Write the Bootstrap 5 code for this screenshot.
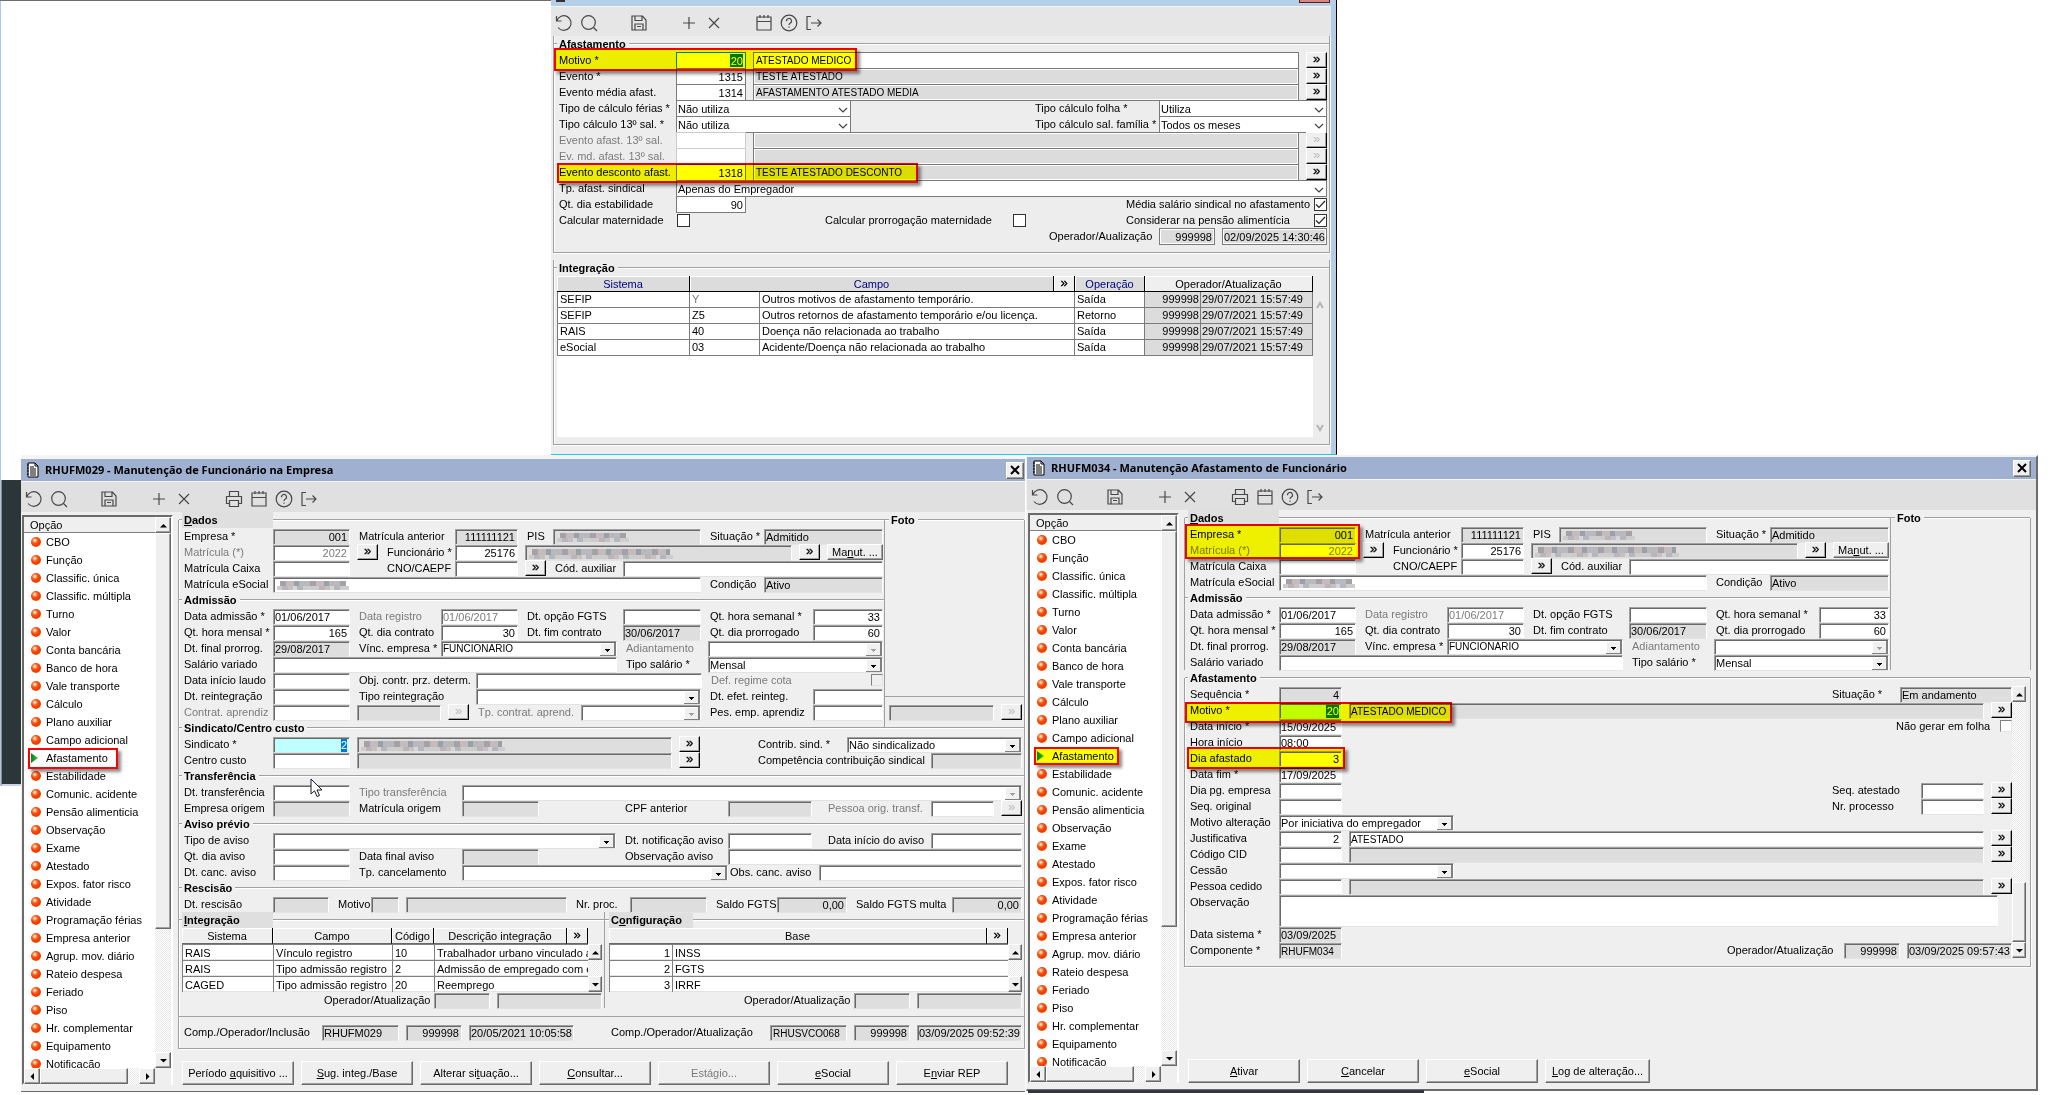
<!DOCTYPE html>
<html lang="pt-BR">
<head>
<meta charset="utf-8">
<meta name="viewport" content="width=device-width, initial-scale=1">
<title>Manutenção de Afastamento</title>
<link href="https://cdn.jsdelivr.net/npm/bootstrap@5.3.0/dist/css/bootstrap.min.css" rel="stylesheet">
<style>
:root{--u:7px;--face:#efefef;--bar:#e0e0e0;
--arr:url("data:image/svg+xml,%3Csvg xmlns='http://www.w3.org/2000/svg' width='16' height='14' shape-rendering='crispEdges'%3E%3Cpath fill='%23f0f0f0' d='M0 0h16v14H0z'/%3E%3Cpath stroke='%23fff' fill='none' d='M.5 13V.5H15'/%3E%3Cpath stroke='%23808080' stroke-width='2' fill='none' d='M0 13h15V0'/%3E%3Cpath d='M5 6h5v1H5zM6 7h3v1H6zM7 8h1v1H7z'/%3E%3C/svg%3E");
--arroff:url("data:image/svg+xml,%3Csvg xmlns='http://www.w3.org/2000/svg' width='16' height='14' shape-rendering='crispEdges'%3E%3Cpath fill='%23f0f0f0' d='M0 0h16v14H0z'/%3E%3Cpath stroke='%23fff' fill='none' d='M.5 13V.5H15'/%3E%3Cpath stroke='%23808080' stroke-width='2' fill='none' d='M0 13h15V0'/%3E%3Cpath fill='%23a0a0a0' d='M5 6h5v1H5zM6 7h3v1H6zM7 8h1v1H7z'/%3E%3C/svg%3E");
--chev:url("data:image/svg+xml,%3Csvg xmlns='http://www.w3.org/2000/svg' width='12' height='14'%3E%3Cpath stroke='%23444' stroke-width='1.2' fill='none' d='M1 6l4 4 4-4'/%3E%3C/svg%3E");
--tick:url("data:image/svg+xml,%3Csvg xmlns='http://www.w3.org/2000/svg' width='11' height='11'%3E%3Cpath stroke='%23222' stroke-width='1.2' fill='none' d='M1 5.5l3 3 6-6.500'/%3E%3C/svg%3E")}
body{font-family:"Liberation Sans",Arial,sans-serif;font-size:11px;line-height:16px;color:#000;background:#fff;overflow-x:hidden}
.strip{position:absolute;left:0;top:0;width:21px;height:786px;border-left:1px solid #a9c8ea;z-index:-1}
.strip::after{content:"";position:absolute;left:0;right:0;top:480px;bottom:0;background:#2b3639;border-left:1px solid #8a8a8a;border-bottom:2px solid #c9d3ea}
.gap-l{flex:551 1 0;border-top:1px solid #6d6d6d}
.gap-r{flex:721 1 0}
.win-top{flex:785 1 1px;min-width:0;background:#ededed;border-right:1px solid #000;border-bottom:1px solid #22c8e0;--bar:#e6e6e6;--face:#ededed}
.win-top .inner{border-right:5px solid #b4cde6;padding:0 1px 9px 2px}
.win-top .tools{height:30px;margin:0 -1px 0 -2px}
.win-top .frame+.frame{margin-top:15px;padding-bottom:7px}
.topcap{height:6px;background:#b5cfe9;padding:0 6px 0 5px}
.topcap i{width:9px;height:2px;background:#333}
.topcap b{width:31px;height:3px;background:#d98880;border:1px solid #5a1a1a;border-top:0}
.lower{padding:0 20px 0 21px;gap:1px}
.win{background:var(--face);min-width:0}
.win-a{flex:1004 1 0;border-top:4px solid #f4f4f4;box-shadow:inset 0 1px #dde3ec;border-bottom:1px solid #6b6b6b;margin-bottom:2px}
.win-b{flex:1009 1 3px;border:solid;border-width:2px 2px 2px 1px;border-color:#f2f2f2 #6b6b6b #6b6b6b #f2f2f2;margin-bottom:4px}
.cap{height:22px;background:#a0b0d0;padding:0 1px 0 6px;font:bold 11px/22px "Noto Sans","DejaVu Sans",sans-serif}
.cap svg{width:12px;height:16px}
.cap span{margin-left:6px}
.bevel{background:#efefef;border:1px solid;border-color:#fff #696969 #696969 #fff;box-shadow:inset -1px -1px #a0a0a0;padding:0;color:#000;font-size:11px;line-height:14px;border-radius:0;flex:none}
.xbtn{width:18px;height:17px}
.xbtn svg{width:10px;height:10px;display:block;margin:auto}
.tools{height:31px;background:var(--bar);border-top:1px solid #f4f4f4;padding-top:3px}
.tools button{width:25px;height:25px;border:0;background:none;padding:0;flex:none}
.tools svg{width:18px;height:18px;fill:none;stroke:#484848;stroke-width:1.2;display:block;margin:auto}
.skip{margin-left:25px}
.side{width:151px;height:570px;margin:3px 5px 6px 1px;border:2px solid;border-color:#6b6b6b #fff #fff #6b6b6b;flex:none;background:#fff}
.side-head{height:16px;background:#efefef;border-bottom:1px solid #808080;padding-left:6px}
.tree{height:535px;overflow:hidden;margin:0;padding:0;list-style:none;background:#fff}
.tree li{height:18px;position:relative}
.tree a{color:#000;text-decoration:none;line-height:18px;padding-left:7px}
.tree a::before{content:"";width:10px;height:10px;border-radius:50%;margin-right:5px;background:radial-gradient(circle at 38% 34%,#fff 0,#ffb27a 14%,#f85010 34%,#f03800 62%,#f8a800 100%)}
.tree a.cur::before{border-radius:0;width:7px;margin-right:8px;background:linear-gradient(90deg,#0a7a2a,#36c936);clip-path:polygon(0 0,100% 50%,0 100%)}
.sb{background:repeating-conic-gradient(#fff 0 25%,#e8e8e8 0 50%) 0 0/2px 2px;width:16px;flex:none}
.sb button,.hs button{display:block;width:100%;height:16px;position:relative}
.sb i{display:block;border:1px solid;border-color:#fff #696969 #696969 #fff;background:#efefef;box-shadow:inset -1px -1px #a0a0a0}
.sb svg,.hs svg{width:7px;height:7px;display:block;margin:auto}
.th-tree{height:396px}
.hs{height:17px;background:repeating-conic-gradient(#fff 0 25%,#e8e8e8 0 50%) 0 0/2px 2px}
.hs button{width:16px;height:16px}
.hs .bevel{height:16px}
.th-h{width:88px}
.hs .corner{width:16px;background:#efefef}
.main{flex:1 1 0;min-width:0}
.main-b{padding-right:5px}
.frame{border:1px solid #a0a0a0;border-top:0;margin-top:8px;box-shadow:1px 1px #fff,inset 1px 0 #fff;padding-bottom:8px}
.frame>.leg:first-child,.lift{margin-top:-8px}
.leg{height:16px;font-weight:bold;display:flex;align-items:center}
.leg::before,.leg::after{content:"";height:2px;border-top:1px solid #a0a0a0;background:#fff;width:3px;flex:none}
.leg::after{flex:1 1 0}
.leg span{padding:0 3px 0 2px}
.leg .hot{background:#dfdfdf;height:16px;width:91px}
.leg .hot2{background:#dfdfdf;width:84px}
.leg.wide::before{width:4px}
.frow{height:16px;padding:0 2px 0 3px;position:relative}
.frow>*{flex:none}
.frow>.grow{flex:1 1 0;min-width:0}
label{padding-left:2px;white-space:nowrap}
.dim{color:#7b7b7b}
.fld{height:16px;margin-top:1px;border:1px solid;border-color:#a0a0a0 #fff #e3e3e3 #a0a0a0;box-shadow:inset 1px 1px #696969;background:#fff;padding:0 0 0 1px;font-size:11px;line-height:14px;color:#000;border-radius:0;outline:0}
.fld.dim{color:#7b7b7b}
.fld.num{text-align:right;padding-right:2px}
.ro{background:#dedede}
.fld.caps{font-size:10px}
.fld.caps.desc{padding-left:2px}
select.fld{appearance:none;background:#fff var(--arr) right 0 top 1px no-repeat}
select.off{background-image:var(--arroff);color:#7b7b7b}
.selnum{background:linear-gradient(#0078d7,#0078d7) right 2px top 1px/13px 13px no-repeat #c0ffff;color:#fff}
.selone{background-size:6px 13px}
.win-top .selnum{background-color:#fff}
.mos{background-repeat:no-repeat;background-position:3px 2px,7px 5px;color:transparent;background-image:repeating-linear-gradient(90deg,#cfcacc 0 5px,#bbb5bb 5px 11px,#c8c0be 11px 16px,#d6d6da 16px 20px,#b4b8be 20px 26px,#cdcdcd 26px 37px),repeating-linear-gradient(90deg,#a5a1a6 0 6px,#c4bcbc 6px 14px,#98a0a8 14px 19px,#b9b9bd 19px 30px)}
.m1{background-size:72px 4px,66px 6px;background-position:3px 8px,6px 3px}
.m2{background-size:144px 4px,138px 6px;background-position:3px 9px,6px 3px}
.go{width:21px;height:16px;border-color:#fff #000 #000 #fff;font-size:13px;line-height:10px;background:#efefef;padding:0 0 2px;-webkit-text-stroke:.3px #000}
.go.off{color:#b8b8b8;-webkit-text-stroke:0}
.chk{appearance:none;width:12px;height:12px;margin:2px 0 0 1px;border:1px solid;border-color:#808080 #e3e3e3 #e3e3e3 #808080;background:#fff;border-radius:0}
.chk.ro{background:#efefef}
.win-top .fld{height:17px;margin-top:0;margin-bottom:-1px;border-color:#7a7a7a;box-shadow:none}
.win-top .fld.ro{background-color:#dcdcdc;box-shadow:inset -1px -1px #fff,inset 1px 1px #fff}
.win-top select.fld{background-image:var(--chev)}
.win-top .fld.pale{border-color:#ccc}
.win-top .chk{width:13px;height:13px;border-color:#333}
.win-top .chk:checked{background-image:var(--tick)}
.win-top .fld.mine{border-color:#084}
.hl{position:absolute;border:2px solid #f00;background:#ff0;mix-blend-mode:multiply;box-shadow:3px 3px 3px rgba(0,0,0,.45);z-index:3;pointer-events:none}
.hl-m{left:0;top:-4px;width:303px;height:23px}
.hl-d{left:3px;top:-1px;width:361px;height:20px}
.hl-e{left:0;top:-2px;width:175px;height:35px}
.hl-b{left:0;top:0;width:267px;height:21px}
.hl-f{left:2px;top:-3px;width:158px;height:22px}
.hl-t{left:4px;top:0;width:85px;height:18px}
.hl-o{left:4px;top:-1px;width:90px;height:21px;background:none}
.ptr{position:absolute;left:131px;top:-6px;width:13px;height:20px;z-index:4}
.gtbl{table-layout:fixed;width:100%;border-collapse:separate;border-spacing:0}
.gtbl th{height:16px;font-weight:normal;text-align:center;padding:0;line-height:14px;white-space:nowrap;background:#efefef;border-right:1px solid #000;border-bottom:1px solid #696969;box-shadow:inset 1px 1px #fff}
.gtbl td{height:16px;padding:0 2px;line-height:14px;background:#fff;border:1px solid #808080;border-width:1px 0 0 1px;white-space:nowrap;overflow:hidden;box-shadow:inset 0 -1px #e3e3e3}
.gtbl .go{border:0;width:100%;height:13px;display:block;background:none}
.ttbl th{background:#dcdcdc;color:#00007f;border-bottom-color:#000}
.ttbl th.plain{background:#efefef;color:#000}
.ttbl td{border:1px solid #7a7a7a;border-width:0 1px 1px 0;box-shadow:none;line-height:15px}
.ttbl td:first-child{border-left-width:1px}
.ttbl .g{background:#dcdcdc;padding:0 1px}
.sheet{background:#fff;height:161px}
.sbt{width:14px}
.sbt svg{width:10px;height:10px}
.left-g{flex:1 1 0;min-width:0;position:relative}
.left-g::after{content:"";position:absolute;right:0;top:8px;bottom:-8px;border-right:1px solid #a0a0a0}
.left-g.cut::after{bottom:0}
.foto{width:139px;flex:none}
.foto .tail{border-top:1px solid #a0a0a0;padding:7px 0 0 1px}
.integ{width:426px;flex:none;border-right:1px solid #a0a0a0}
.thin{border-top:1px solid #a0a0a0;margin:8px 0 7px}
.acts{margin:12px 0 6px 4px;gap:7px}
.acts .bevel{height:24px;width:112px;line-height:20px}
.acts .log{width:105px}
.upper-b{border-right:1px solid #a0a0a0;border-left:1px solid #a0a0a0;margin-top:8px}
.tall{height:32px}
textarea.fld{height:32px;resize:none;margin-right:12px}
.sb2{width:14px}
.th-b{height:60px}
.low-line{position:absolute;left:1028px;width:396px;top:1090px;height:3px;background:#333640}
.u1{width:7px}.u2{width:14px}.u3{width:21px}.u4{width:28px}.u5{width:35px}.u6{width:42px}.u8{width:56px}.u9{width:63px}.u10{width:70px}.u11{width:77px}.u12{width:84px}.u13{width:91px}.u14{width:98px}.u15{width:105px}.u16{width:112px}.u17{width:119px}.u18{width:126px}.u19{width:133px}.u20{width:140px}.u21{width:147px}.u23{width:161px}.u24{width:168px}.u25{width:175px}.u27{width:189px}.u29{width:203px}.u42{width:294px}
.o1{margin-left:7px}.o2{margin-left:14px}.o5{margin-left:35px}.o8{margin-left:56px}.o14{margin-left:98px}
</style>
<script src="https://cdn.jsdelivr.net/npm/bootstrap@5.3.0/dist/js/bootstrap.bundle.min.js"></script>
</head>
<body>
<svg class="d-none">
<symbol id="undo" viewBox="0 0 18 18"><path d="M1.500 2v5h5M1.800 6.800A7.300 7.300 0 1 1 3 13.500"/></symbol>
<symbol id="find" viewBox="0 0 18 18"><circle cx="8.500" cy="8.500" r="6.800"/><path d="M13.500 13.500L17 17"/></symbol>
<symbol id="save" viewBox="0 0 18 18"><path d="M2 3.500V16h14V6l-3.500-4H2zM5 2v4.500h7V2.500M5 16V10h8v6M7 12.500h4"/></symbol>
<symbol id="plus" viewBox="0 0 18 18"><path d="M9 3v12M3 9h12"/></symbol>
<symbol id="del" viewBox="0 0 18 18"><path d="M4 4l10 10M14 4L4 14"/></symbol>
<symbol id="print" viewBox="0 0 18 18"><path d="M4.500 6.500V1.500h9v5M4.500 13.500h-3v-7h15v7h-3M4.500 10.500h9v6h-9z"/></symbol>
<symbol id="cal" viewBox="0 0 18 18"><path d="M2 3h14v13H2zM2 7.500h14M5 1v3M9 1v3M13 1v3"/></symbol>
<symbol id="help" viewBox="0 0 18 18"><circle cx="9" cy="9" r="7.800"/><path d="M6.500 7.200a2.500 2.500 0 1 1 3.600 2c-.8.400-1.100.8-1.100 1.700M9 12.500v1.200"/></symbol>
<symbol id="exit" viewBox="0 0 18 18"><path d="M6 2.500H2v13h4M6 9h10M12.500 5.500L16 9l-3.500 3.500"/></symbol>
<symbol id="doc" viewBox="0 0 12 16"><path d="M1 1h7l3 3v11H1z" fill="#fff" stroke="#000"/><path d="M8 1v3h3M3 5h4M3 7h6M3 9h6M3 11h6M3 13h6M0 3h2M0 6h2M0 9h2M0 12h2" stroke="#000" fill="none"/></symbol>
<symbol id="xx" viewBox="0 0 10 10"><path d="M1 1l8 8M9 1L1 9" stroke="#000" stroke-width="2"/></symbol>
<symbol id="up" viewBox="0 0 7 7"><path d="M0 5.500h7L3.500 2z"/></symbol>
<symbol id="dn" viewBox="0 0 7 7"><path d="M0 2h7L3.500 5.500z"/></symbol>
<symbol id="lf" viewBox="0 0 7 7"><path d="M5 0v7L1.500 3.500z"/></symbol>
<symbol id="rt" viewBox="0 0 7 7"><path d="M2 0v7l3.500-3.500z"/></symbol>
</svg>
<div class="strip"></div>
<div class="low-line"></div>

<div class="d-flex align-items-start">
<div class="gap-l"></div>
<section class="win-top">
<div class="topcap d-flex justify-content-between"><i></i><b></b></div>
<div class="inner">
<div class="tools d-flex align-items-center" role="toolbar">
<button aria-label="Desfazer"><svg><use href="#undo"/></svg></button><button aria-label="Pesquisar"><svg><use href="#find"/></svg></button><button class="skip" aria-label="Salvar"><svg><use href="#save"/></svg></button><button class="skip" aria-label="Incluir"><svg><use href="#plus"/></svg></button><button aria-label="Excluir"><svg><use href="#del"/></svg></button><button class="skip" aria-label="Calendário"><svg><use href="#cal"/></svg></button><button aria-label="Ajuda"><svg><use href="#help"/></svg></button><button aria-label="Sair"><svg><use href="#exit"/></svg></button>
</div>
<form class="frame">
<div class="leg"><span>Afastamento</span></div>
<div class="frow d-flex"><label class="u17" for="t1">Motivo *</label><input id="t1" class="fld num u10 selnum mine" value="20"><input class="fld grow o1 caps desc" aria-label="Descrição do motivo" value="ATESTADO MEDICO"><button type="button" class="bevel go o1">»</button><span class="hl hl-m"></span></div>
<div class="frow d-flex"><label class="u17" for="t2">Evento *</label><input id="t2" class="fld num u10" value="1315"><input class="fld ro grow o1 caps desc" aria-label="Descrição do evento" value="TESTE ATESTADO"><button type="button" class="bevel go o1">»</button></div>
<div class="frow d-flex"><label class="u17" for="t3">Evento média afast.</label><input id="t3" class="fld num u10" value="1314"><input class="fld ro grow o1 caps desc" aria-label="Descrição do evento média" value="AFASTAMENTO ATESTADO MEDIA"><button type="button" class="bevel go o1">»</button></div>
<div class="frow d-flex"><label class="u17" for="t4">Tipo de cálculo férias *</label><select id="t4" class="fld u25"><option>Não utiliza</option></select><label class="u18 ms-auto" for="t5">Tipo cálculo folha *</label><select id="t5" class="fld u24"><option>Utiliza</option></select></div>
<div class="frow d-flex"><label class="u17" for="t6">Tipo cálculo 13º sal. *</label><select id="t6" class="fld u25"><option>Não utiliza</option></select><label class="u18 ms-auto" for="t7">Tipo cálculo sal. família *</label><select id="t7" class="fld u24"><option>Todos os meses</option></select></div>
<div class="frow d-flex"><label class="u17 dim" for="t8">Evento afast. 13º sal.</label><input id="t8" class="fld num u10 pale"><input class="fld ro grow o1" aria-label="Descrição evento 13º"><button type="button" class="bevel go off o1">»</button></div>
<div class="frow d-flex"><label class="u17 dim" for="t9">Ev. md. afast. 13º sal.</label><input id="t9" class="fld num u10 pale"><input class="fld ro grow o1" aria-label="Descrição evento média 13º"><button type="button" class="bevel go off o1">»</button></div>
<div class="frow d-flex"><label class="u17" for="t10">Evento desconto afast.</label><input id="t10" class="fld num u10" value="1318"><input class="fld ro grow o1 caps desc" aria-label="Descrição evento desconto" value="TESTE ATESTADO DESCONTO"><button type="button" class="bevel go o1">»</button><span class="hl hl-d"></span></div>
<div class="frow d-flex"><label class="u17" for="t11">Tp. afast. sindical</label><select id="t11" class="fld grow"><option>Apenas do Empregador</option></select></div>
<div class="frow d-flex"><label class="u17" for="t12">Qt. dia estabilidade</label><input id="t12" class="fld num u10" value="90"><label class="u27 ms-auto" for="t13">Média salário sindical no afastamento</label><input id="t13" type="checkbox" class="chk" checked></div>
<div class="frow d-flex"><label class="u17" for="t14">Calcular maternidade</label><input id="t14" type="checkbox" class="chk"><label class="u27 ms-auto" for="t15">Calcular prorrogação maternidade</label><input id="t15" type="checkbox" class="chk"><label class="u27 o14" for="t16">Considerar na pensão alimentícia</label><input id="t16" type="checkbox" class="chk" checked></div>
<div class="frow d-flex"><label class="u16 ms-auto" for="t17">Operador/Aualização</label><input id="t17" class="fld ro num u8" value="999998"><input class="fld ro u15 o1" aria-label="Data" value="02/09/2025 14:30:46"></div>
</form>
<section class="frame">
<div class="leg"><span>Integração</span></div>
<div class="frow d-flex h-auto">
<div class="grow sheet">
<table class="gtbl ttbl">
<colgroup><col class="u19"><col class="u10"><col><col class="u3"><col class="u10"><col class="u8"><col class="u16"></colgroup>
<thead><tr><th>Sistema</th><th colspan="2">Campo</th><th class="plain"><button class="go">»</button></th><th>Operação</th><th colspan="2" class="plain">Operador/Atualização</th></tr></thead>
<tbody>
<tr><td>SEFIP</td><td class="dim">Y</td><td colspan="2">Outros motivos de afastamento temporário.</td><td>Saída</td><td class="g text-end">999998</td><td class="g">29/07/2021 15:57:49</td></tr>
<tr><td>SEFIP</td><td>Z5</td><td colspan="2">Outros retornos de afastamento temporário e/ou licença.</td><td>Retorno</td><td class="g text-end">999998</td><td class="g">29/07/2021 15:57:49</td></tr>
<tr><td>RAIS</td><td>40</td><td colspan="2">Doença não relacionada ao trabalho</td><td>Saída</td><td class="g text-end">999998</td><td class="g">29/07/2021 15:57:49</td></tr>
<tr><td>eSocial</td><td>03</td><td colspan="2">Acidente/Doença não relacionada ao trabalho</td><td>Saída</td><td class="g text-end">999998</td><td class="g">29/07/2021 15:57:49</td></tr>
</tbody></table>
</div>
<div class="sbt d-flex flex-column justify-content-between align-items-center pt-4 pb-1"><svg viewBox="0 0 10 10"><path d="M2 8l3-5 3 5" fill="none" stroke="#b5b5b5" stroke-width="2"/></svg><svg viewBox="0 0 10 10"><path d="M2 2l3 5 3-5" fill="none" stroke="#b5b5b5" stroke-width="2"/></svg></div>
</div>
</section>
</div>
</section>
<div class="gap-r"></div>
</div>

<div class="lower d-flex align-items-start">
<section class="win win-a">
<header class="cap d-flex align-items-center"><svg><use href="#doc"/></svg><span class="me-auto">RHUFM029 - Manutenção de Funcionário na Empresa</span><button class="bevel xbtn" aria-label="Fechar"><svg><use href="#xx"/></svg></button></header>
<div class="tools d-flex align-items-center" role="toolbar">
<button aria-label="Desfazer"><svg><use href="#undo"/></svg></button><button aria-label="Pesquisar"><svg><use href="#find"/></svg></button><button class="skip" aria-label="Salvar"><svg><use href="#save"/></svg></button><button class="skip" aria-label="Incluir"><svg><use href="#plus"/></svg></button><button aria-label="Excluir"><svg><use href="#del"/></svg></button><button class="skip" aria-label="Imprimir"><svg><use href="#print"/></svg></button><button aria-label="Calendário"><svg><use href="#cal"/></svg></button><button aria-label="Ajuda"><svg><use href="#help"/></svg></button><button aria-label="Sair"><svg><use href="#exit"/></svg></button>
</div>
<div class="d-flex">
<nav class="side">
<div class="d-flex">
<div class="flex-grow-1">
<div class="side-head">Opção</div>
<ul class="tree">
<li><a class="d-flex align-items-center" href="#">CBO</a></li><li><a class="d-flex align-items-center" href="#">Função</a></li><li><a class="d-flex align-items-center" href="#">Classific. única</a></li><li><a class="d-flex align-items-center" href="#">Classific. múltipla</a></li><li><a class="d-flex align-items-center" href="#">Turno</a></li><li><a class="d-flex align-items-center" href="#">Valor</a></li><li><a class="d-flex align-items-center" href="#">Conta bancária</a></li><li><a class="d-flex align-items-center" href="#">Banco de hora</a></li><li><a class="d-flex align-items-center" href="#">Vale transporte</a></li><li><a class="d-flex align-items-center" href="#">Cálculo</a></li><li><a class="d-flex align-items-center" href="#">Plano auxiliar</a></li><li><a class="d-flex align-items-center" href="#">Campo adicional</a></li><li><a class="d-flex align-items-center cur" href="#">Afastamento</a><span class="hl hl-o"></span></li><li><a class="d-flex align-items-center" href="#">Estabilidade</a></li><li><a class="d-flex align-items-center" href="#">Comunic. acidente</a></li><li><a class="d-flex align-items-center" href="#">Pensão alimenticia</a></li><li><a class="d-flex align-items-center" href="#">Observação</a></li><li><a class="d-flex align-items-center" href="#">Exame</a></li><li><a class="d-flex align-items-center" href="#">Atestado</a></li><li><a class="d-flex align-items-center" href="#">Expos. fator risco</a></li><li><a class="d-flex align-items-center" href="#">Atividade</a></li><li><a class="d-flex align-items-center" href="#">Programação férias</a></li><li><a class="d-flex align-items-center" href="#">Empresa anterior</a></li><li><a class="d-flex align-items-center" href="#">Agrup. mov. diário</a></li><li><a class="d-flex align-items-center" href="#">Rateio despesa</a></li><li><a class="d-flex align-items-center" href="#">Feriado</a></li><li><a class="d-flex align-items-center" href="#">Piso</a></li><li><a class="d-flex align-items-center" href="#">Hr. complementar</a></li><li><a class="d-flex align-items-center" href="#">Equipamento</a></li><li><a class="d-flex align-items-center" href="#">Notificação</a></li>
</ul>
</div>
<div class="sb d-flex flex-column"><button class="bevel" aria-label="Subir"><svg><use href="#up"/></svg></button><i class="th-tree"></i><button class="bevel mt-auto" aria-label="Descer"><svg><use href="#dn"/></svg></button></div>
</div>
<div class="hs d-flex"><button class="bevel" aria-label="Esquerda"><svg><use href="#lf"/></svg></button><i class="bevel th-h"></i><button class="bevel ms-auto" aria-label="Direita"><svg><use href="#rt"/></svg></button><span class="corner"></span></div>
</nav>
<div class="main d-flex flex-column">
<form class="frame">
<div class="d-flex lift">
<div class="left-g">
<div class="leg"><span class="hot"><u>D</u>ados</span></div>
<div class="frow d-flex"><label class="u13" for="a1">Empresa *</label><input id="a1" class="fld ro num u11" value="001"><label class="u14 o1" for="a2">Matrícula anterior</label><input id="a2" class="fld ro num u9" value="111111121"><label class="u4 o1" for="a3">PIS</label><input id="a3" class="fld ro mos m1 grow"><label class="u8 o1" for="a4">Situação *</label><input id="a4" class="fld ro u17" value="Admitido"></div>
<div class="frow d-flex"><label class="u13 dim" for="a5">Matrícula (*)</label><input id="a5" class="fld num dim u11" value="2022"><button type="button" class="bevel go o1">»</button><label class="u10 o1" for="a6">Funcionário *</label><input id="a6" class="fld num u9" value="25176"><input class="fld ro mos m2 grow o1" aria-label="Nome"><button type="button" class="bevel go o1">»</button><button type="button" class="bevel u8 o1">Ma<u>n</u>ut. ...</button></div>
<div class="frow d-flex"><label class="u13" for="a7">Matrícula Caixa</label><input id="a7" class="fld u11"><label class="u10 o5" for="a8">CNO/CAEPF</label><input id="a8" class="fld u9"><button type="button" class="bevel go o1">»</button><label class="u10 o1" for="a9">Cód. auxiliar</label><input id="a9" class="fld grow"></div>
<div class="frow d-flex"><label class="u13" for="a10">Matrícula eSocial</label><input id="a10" class="fld mos m1 grow"><label class="u8 o1" for="a11">Condição</label><input id="a11" class="fld ro u17" value="Ativo"></div>
<div class="leg"><span>Admissão</span></div>
<div class="frow d-flex"><label class="u13" for="a12">Data admissão *</label><input id="a12" class="fld u11" value="01/06/2017"><label class="u12 o1 dim" for="a13">Data registro</label><input id="a13" class="fld dim u11" value="01/06/2017"><label class="u14 o1" for="a14">Dt. opção FGTS</label><input id="a14" class="fld grow"><label class="u15 o1" for="a15">Qt. hora semanal *</label><input id="a15" class="fld num u10" value="33"></div>
<div class="frow d-flex"><label class="u13" for="a16">Qt. hora mensal *</label><input id="a16" class="fld num u11" value="165"><label class="u12 o1" for="a17">Qt. dia contrato</label><input id="a17" class="fld num u11" value="30"><label class="u14 o1" for="a18">Dt. fim contrato</label><input id="a18" class="fld ro grow" value="30/06/2017"><label class="u15 o1" for="a19">Qt. dia prorrogado</label><input id="a19" class="fld num u10" value="60"></div>
<div class="frow d-flex"><label class="u13" for="a20">Dt. final prorrog.</label><input id="a20" class="fld ro u11" value="29/08/2017"><label class="u12 o1" for="a21">Vínc. empresa *</label><select id="a21" class="fld grow caps"><option>FUNCIONARIO</option></select><label class="u12 o1 dim" for="a22">Adiantamento</label><select id="a22" class="fld off u25"><option></option></select></div>
<div class="frow d-flex"><label class="u13" for="a23">Salário variado</label><input id="a23" class="fld grow"><label class="u12 o1" for="a24">Tipo salário *</label><select id="a24" class="fld u25"><option>Mensal</option></select></div>
<div class="frow d-flex"><label class="u13" for="a25">Data início laudo</label><input id="a25" class="fld u11"><label class="u17 o1" for="a26">Obj. contr. prz. determ.</label><input id="a26" class="fld grow"><label class="u23 o1 dim" for="a27">Def. regime cota</label><input id="a27" type="checkbox" class="chk ro"></div>
<div class="frow d-flex"><label class="u13" for="a28">Dt. reintegração</label><input id="a28" class="fld u11"><label class="u17 o1" for="a29">Tipo reintegração</label><select id="a29" class="fld grow"><option></option></select><label class="u15 o1" for="a30">Dt. efet. reinteg.</label><input id="a30" class="fld u10"></div>
<div class="frow d-flex"><label class="u13 dim" for="a31">Contrat. aprendiz</label><input id="a31" class="fld u11"><input class="fld ro u12 o1" aria-label="Aprendiz"><button type="button" class="bevel go off o1">»</button><label class="u15 o1 dim" for="a32">Tp. contrat. aprend.</label><select id="a32" class="fld off grow"><option></option></select><label class="u15 o1" for="a33">Pes. emp. aprendiz</label><input id="a33" class="fld u10"></div>
</div>
<div class="foto d-flex flex-column">
<div class="leg wide"><span>Foto</span></div>
<div class="tail mt-auto"><div class="frow d-flex"><input class="fld ro grow" aria-label="Arquivo da foto"><button type="button" class="bevel go off o1">»</button></div></div>
</div>
</div>
<div class="leg"><span>Sindicato/Centro custo</span></div>
<div class="frow d-flex"><label class="u13" for="a34">Sindicato *</label><input id="a34" class="fld num selnum selone u11" value="2"><input class="fld ro mos m2 grow o1" aria-label="Nome do sindicato"><button type="button" class="bevel go o1">»</button><label class="u13 o8" for="a35">Contrib. sind. *</label><select id="a35" class="fld u25"><option>Não sindicalizado</option></select></div>
<div class="frow d-flex"><label class="u13" for="a36">Centro custo</label><input id="a36" class="fld u11"><input class="fld ro grow o1" aria-label="Nome do centro de custo"><button type="button" class="bevel go o1">»</button><label class="u25 o8" for="a37">Competência contribuição sindical</label><input id="a37" class="fld ro u13"></div>
<div class="leg"><span>Transferência</span></div>
<div class="frow d-flex"><label class="u13" for="a38">Dt. transferência</label><input id="a38" class="fld u11"><label class="u15 o1 dim" for="a39">Tipo transferência</label><select id="a39" class="fld off grow"><option></option></select><svg class="ptr" viewBox="0 0 13 20"><path d="M1 1v15l3.500-3.200L7 18.500l2.500-1-2.500-5.500h5z" fill="#fff" stroke="#1a1a2a"/></svg></div>
<div class="frow d-flex"><label class="u13" for="a40">Empresa origem</label><input id="a40" class="fld ro u11"><label class="u15 o1" for="a41">Matrícula origem</label><input id="a41" class="fld ro u11"><label class="u15 ms-auto" for="a42">CPF anterior</label><input id="a42" class="fld ro u12"><label class="u15 o2 dim" for="a43">Pessoa orig. transf.</label><input id="a43" class="fld u9"><button type="button" class="bevel go off o1">»</button></div>
<div class="leg"><span>Aviso prévio</span></div>
<div class="frow d-flex"><label class="u13" for="a44">Tipo de aviso</label><select id="a44" class="fld grow"><option></option></select><label class="u15 o1" for="a45">Dt. notificação aviso</label><input id="a45" class="fld u12"><label class="u15 o2" for="a46">Data início do aviso</label><input id="a46" class="fld u13"></div>
<div class="frow d-flex"><label class="u13" for="a47">Qt. dia aviso</label><input id="a47" class="fld u11"><label class="u15 o1" for="a48">Data final aviso</label><input id="a48" class="fld ro u11"><label class="u15 ms-auto" for="a49">Observação aviso</label><input id="a49" class="fld u42"></div>
<div class="frow d-flex"><label class="u13" for="a50">Dt. canc. aviso</label><input id="a50" class="fld u11"><label class="u15 o1" for="a51">Tp. cancelamento</label><select id="a51" class="fld grow"><option></option></select><label class="u13" for="a52">Obs. canc. aviso</label><input id="a52" class="fld u29"></div>
<div class="leg"><span>Rescisão</span></div>
<div class="frow d-flex"><label class="u13" for="a53">Dt. rescisão</label><input id="a53" class="fld ro u8"><label class="u5 o1" for="a54">Motivo</label><input id="a54" class="fld ro u4"><input class="fld ro grow o1" aria-label="Descrição do motivo"><label class="u8 o1" for="a55">Nr. proc.</label><input id="a55" class="fld ro u11"><label class="u9 o1" for="a56">Saldo FGTS</label><input id="a56" class="fld ro num u10" value="0,00"><label class="u14 o1" for="a57">Saldo FGTS multa</label><input id="a57" class="fld ro num u10" value="0,00"></div>
<div class="d-flex">
<div class="integ">
<div class="leg"><span class="hot"><u>I</u>ntegração</span></div>
<div class="frow d-flex h-auto">
<div class="grow"><table class="gtbl">
<colgroup><col class="u13"><col class="u17"><col class="u6"><col><col class="u3"></colgroup>
<thead><tr><th>Sistema</th><th>Campo</th><th>Código</th><th>Descrição integração</th><th><button type="button" class="go">»</button></th></tr></thead>
<tbody><tr><td>RAIS</td><td>Vínculo registro</td><td>10</td><td colspan="2">Trabalhador urbano vinculado a</td></tr>
<tr><td>RAIS</td><td>Tipo admissão registro</td><td>2</td><td colspan="2">Admissão de empregado com e</td></tr>
<tr><td>CAGED</td><td>Tipo admissão registro</td><td>20</td><td colspan="2">Reemprego</td></tr></tbody></table></div>
<div class="sb sb2 d-flex flex-column mt-3"><button type="button" class="bevel" aria-label="Subir"><svg><use href="#up"/></svg></button><button type="button" class="bevel mt-auto" aria-label="Descer"><svg><use href="#dn"/></svg></button></div>
</div>
<div class="frow d-flex"><label class="u16 ms-auto" for="a58">Operador/Atualização</label><input id="a58" class="fld ro u8"><input class="fld ro u15 o1" aria-label="Data"></div>
</div>
<div class="flex-grow-1">
<div class="leg wide"><span class="hot2">C<u>o</u>nfiguração</span></div>
<div class="frow d-flex h-auto ps-1">
<div class="grow"><table class="gtbl">
<colgroup><col class="u9"><col><col class="u3"></colgroup>
<thead><tr><th colspan="2">Base</th><th><button type="button" class="go">»</button></th></tr></thead>
<tbody><tr><td class="text-end">1</td><td colspan="2">INSS</td></tr><tr><td class="text-end">2</td><td colspan="2">FGTS</td></tr><tr><td class="text-end">3</td><td colspan="2">IRRF</td></tr></tbody></table></div>
<div class="sb sb2 d-flex flex-column mt-3"><button type="button" class="bevel" aria-label="Subir"><svg><use href="#up"/></svg></button><button type="button" class="bevel mt-auto" aria-label="Descer"><svg><use href="#dn"/></svg></button></div>
</div>
<div class="frow d-flex"><label class="u16 ms-auto" for="a59">Operador/Atualização</label><input id="a59" class="fld ro u8"><input class="fld ro u15 o1" aria-label="Data"></div>
</div>
</div>
<div class="thin"></div>
<div class="frow d-flex"><label class="u20" for="a60">Comp./Operador/Inclusão</label><input id="a60" class="fld ro u11" value="RHUFM029"><input class="fld ro num u8 o1" aria-label="Operador" value="999998"><input class="fld ro u15 o1" aria-label="Data inclusão" value="20/05/2021 10:05:58"><label class="u23 ms-auto" for="a61">Comp./Operador/Atualização</label><input id="a61" class="fld ro u11 caps desc" value="RHUSVCO068"><input class="fld ro num u8 o1" aria-label="Operador atualização" value="999998"><input class="fld ro u15 o1" aria-label="Data atualização" value="03/09/2025 09:52:39"></div>
</form>
<div class="acts d-flex"><button class="bevel">Período <u>a</u>quisitivo ...</button><button class="bevel"><u>S</u>ug. integ./Base</button><button class="bevel">Alterar si<u>t</u>uação...</button><button class="bevel"><u>C</u>onsultar...</button><button class="bevel dim">Está<u>g</u>io...</button><button class="bevel"><u>e</u>Social</button><button class="bevel">E<u>n</u>viar REP</button></div>
</div>
</div>
</section>

<section class="win win-b">
<header class="cap d-flex align-items-center"><svg><use href="#doc"/></svg><span class="me-auto">RHUFM034 - Manutenção Afastamento de Funcionário</span><button class="bevel xbtn me-1" aria-label="Fechar"><svg><use href="#xx"/></svg></button></header>
<div class="tools d-flex align-items-center" role="toolbar">
<button aria-label="Desfazer"><svg><use href="#undo"/></svg></button><button aria-label="Pesquisar"><svg><use href="#find"/></svg></button><button class="skip" aria-label="Salvar"><svg><use href="#save"/></svg></button><button class="skip" aria-label="Incluir"><svg><use href="#plus"/></svg></button><button aria-label="Excluir"><svg><use href="#del"/></svg></button><button class="skip" aria-label="Imprimir"><svg><use href="#print"/></svg></button><button aria-label="Calendário"><svg><use href="#cal"/></svg></button><button aria-label="Ajuda"><svg><use href="#help"/></svg></button><button aria-label="Sair"><svg><use href="#exit"/></svg></button>
</div>
<div class="d-flex">
<nav class="side">
<div class="d-flex">
<div class="flex-grow-1">
<div class="side-head">Opção</div>
<ul class="tree">
<li><a class="d-flex align-items-center" href="#">CBO</a></li><li><a class="d-flex align-items-center" href="#">Função</a></li><li><a class="d-flex align-items-center" href="#">Classific. única</a></li><li><a class="d-flex align-items-center" href="#">Classific. múltipla</a></li><li><a class="d-flex align-items-center" href="#">Turno</a></li><li><a class="d-flex align-items-center" href="#">Valor</a></li><li><a class="d-flex align-items-center" href="#">Conta bancária</a></li><li><a class="d-flex align-items-center" href="#">Banco de hora</a></li><li><a class="d-flex align-items-center" href="#">Vale transporte</a></li><li><a class="d-flex align-items-center" href="#">Cálculo</a></li><li><a class="d-flex align-items-center" href="#">Plano auxiliar</a></li><li><a class="d-flex align-items-center" href="#">Campo adicional</a></li><li><a class="d-flex align-items-center cur" href="#">Afastamento</a><span class="hl hl-t"></span></li><li><a class="d-flex align-items-center" href="#">Estabilidade</a></li><li><a class="d-flex align-items-center" href="#">Comunic. acidente</a></li><li><a class="d-flex align-items-center" href="#">Pensão alimenticia</a></li><li><a class="d-flex align-items-center" href="#">Observação</a></li><li><a class="d-flex align-items-center" href="#">Exame</a></li><li><a class="d-flex align-items-center" href="#">Atestado</a></li><li><a class="d-flex align-items-center" href="#">Expos. fator risco</a></li><li><a class="d-flex align-items-center" href="#">Atividade</a></li><li><a class="d-flex align-items-center" href="#">Programação férias</a></li><li><a class="d-flex align-items-center" href="#">Empresa anterior</a></li><li><a class="d-flex align-items-center" href="#">Agrup. mov. diário</a></li><li><a class="d-flex align-items-center" href="#">Rateio despesa</a></li><li><a class="d-flex align-items-center" href="#">Feriado</a></li><li><a class="d-flex align-items-center" href="#">Piso</a></li><li><a class="d-flex align-items-center" href="#">Hr. complementar</a></li><li><a class="d-flex align-items-center" href="#">Equipamento</a></li><li><a class="d-flex align-items-center" href="#">Notificação</a></li>
</ul>
</div>
<div class="sb d-flex flex-column"><button class="bevel" aria-label="Subir"><svg><use href="#up"/></svg></button><i class="th-tree"></i><button class="bevel mt-auto" aria-label="Descer"><svg><use href="#dn"/></svg></button></div>
</div>
<div class="hs d-flex"><button class="bevel" aria-label="Esquerda"><svg><use href="#lf"/></svg></button><i class="bevel th-h"></i><button class="bevel ms-auto" aria-label="Direita"><svg><use href="#rt"/></svg></button><span class="corner"></span></div>
</nav>
<form class="main main-b d-flex flex-column">
<div class="upper-b">
<div class="d-flex lift">
<div class="left-g cut">
<div class="leg"><span class="hot"><u>D</u>ados</span></div>
<div class="frow d-flex"><label class="u13" for="b1">Empresa *</label><input id="b1" class="fld ro num u11" value="001"><label class="u14 o1" for="b2">Matrícula anterior</label><input id="b2" class="fld ro num u9" value="111111121"><label class="u4 o1" for="b3">PIS</label><input id="b3" class="fld ro mos m1 grow"><label class="u8 o1" for="b4">Situação *</label><input id="b4" class="fld ro u17" value="Admitido"><span class="hl hl-e"></span></div>
<div class="frow d-flex"><label class="u13 dim" for="b5">Matrícula (*)</label><input id="b5" class="fld num dim u11" value="2022"><button type="button" class="bevel go o1">»</button><label class="u10 o1" for="b6">Funcionário *</label><input id="b6" class="fld num u9" value="25176"><input class="fld ro mos m2 grow o1" aria-label="Nome"><button type="button" class="bevel go o1">»</button><button type="button" class="bevel u8 o1">Ma<u>n</u>ut. ...</button></div>
<div class="frow d-flex"><label class="u13" for="b7">Matrícula Caixa</label><input id="b7" class="fld u11"><label class="u10 o5" for="b8">CNO/CAEPF</label><input id="b8" class="fld u9"><button type="button" class="bevel go o1">»</button><label class="u10 o1" for="b9">Cód. auxiliar</label><input id="b9" class="fld grow"></div>
<div class="frow d-flex"><label class="u13" for="b10">Matrícula eSocial</label><input id="b10" class="fld mos m1 grow"><label class="u8 o1" for="b11">Condição</label><input id="b11" class="fld ro u17" value="Ativo"></div>
<div class="leg"><span>Admissão</span></div>
<div class="frow d-flex"><label class="u13" for="b12">Data admissão *</label><input id="b12" class="fld u11" value="01/06/2017"><label class="u12 o1 dim" for="b13">Data registro</label><input id="b13" class="fld dim u11" value="01/06/2017"><label class="u14 o1" for="b14">Dt. opção FGTS</label><input id="b14" class="fld grow"><label class="u15 o1" for="b15">Qt. hora semanal *</label><input id="b15" class="fld num u10" value="33"></div>
<div class="frow d-flex"><label class="u13" for="b16">Qt. hora mensal *</label><input id="b16" class="fld num u11" value="165"><label class="u12 o1" for="b17">Qt. dia contrato</label><input id="b17" class="fld num u11" value="30"><label class="u14 o1" for="b18">Dt. fim contrato</label><input id="b18" class="fld ro grow" value="30/06/2017"><label class="u15 o1" for="b19">Qt. dia prorrogado</label><input id="b19" class="fld num u10" value="60"></div>
<div class="frow d-flex"><label class="u13" for="b20">Dt. final prorrog.</label><input id="b20" class="fld ro u11" value="29/08/2017"><label class="u12 o1" for="b21">Vínc. empresa *</label><select id="b21" class="fld grow caps"><option>FUNCIONARIO</option></select><label class="u12 o1 dim" for="b22">Adiantamento</label><select id="b22" class="fld off u25"><option></option></select></div>
<div class="frow d-flex"><label class="u13" for="b23">Salário variado</label><input id="b23" class="fld grow"><label class="u12 o1" for="b24">Tipo salário *</label><select id="b24" class="fld u25"><option>Mensal</option></select></div>
</div>
<div class="foto"><div class="leg wide"><span>Foto</span></div></div>
</div>
</div>
<div class="frame">
<div class="leg"><span>Afastamento</span></div>
<div class="d-flex pe-1 me-n1">
<div class="flex-grow-1">
<div class="frow d-flex pe-0"><label class="u13" for="b30">Sequência *</label><input id="b30" class="fld ro num u9" value="4"><label class="u10 ms-auto" for="b31">Situação *</label><input id="b31" class="fld ro u16" value="Em andamento"></div>
<div class="frow d-flex pe-0"><label class="u13" for="b32">Motivo *</label><input id="b32" class="fld num selnum u9" value="20"><input class="fld ro grow o1 caps" aria-label="Descrição do motivo" value="ATESTADO MEDICO"><button type="button" class="bevel go o1">»</button><span class="hl hl-b"></span></div>
<div class="frow d-flex pe-0"><label class="u13" for="b33">Data início *</label><input id="b33" class="fld u9" value="15/09/2025"><label class="u15 ms-auto" for="b34">Não gerar em folha</label><input id="b34" type="checkbox" class="chk"></div>
<div class="frow d-flex pe-0"><label class="u13" for="b35">Hora início</label><input id="b35" class="fld u9" value="08:00"></div>
<div class="frow d-flex pe-0"><label class="u13" for="b36">Dia afastado</label><input id="b36" class="fld num u9" value="3"><span class="hl hl-f"></span></div>
<div class="frow d-flex pe-0"><label class="u13" for="b37">Data fim *</label><input id="b37" class="fld u9" value="17/09/2025"></div>
<div class="frow d-flex pe-0"><label class="u13" for="b38">Dia pg. empresa</label><input id="b38" class="fld u9"><label class="u13 ms-auto" for="b39">Seq. atestado</label><input id="b39" class="fld u9"><button type="button" class="bevel go o1">»</button></div>
<div class="frow d-flex pe-0"><label class="u13" for="b40">Seq. original</label><input id="b40" class="fld u9"><label class="u13 ms-auto" for="b41">Nr. processo</label><input id="b41" class="fld u9"><button type="button" class="bevel go o1">»</button></div>
<div class="frow d-flex pe-0"><label class="u13" for="b42">Motivo alteração</label><select id="b42" class="fld u25"><option>Por iniciativa do empregador</option></select></div>
<div class="frow d-flex pe-0"><label class="u13" for="b43">Justificativa</label><input id="b43" class="fld num u9" value="2"><input class="fld grow o1 caps" aria-label="Descrição da justificativa" value="ATESTADO"><button type="button" class="bevel go o1">»</button></div>
<div class="frow d-flex pe-0"><label class="u13" for="b44">Código CID</label><input id="b44" class="fld u9"><input class="fld ro grow o1" aria-label="Descrição CID"><button type="button" class="bevel go o1">»</button></div>
<div class="frow d-flex pe-0"><label class="u13" for="b45">Cessão</label><select id="b45" class="fld u25"><option></option></select></div>
<div class="frow d-flex pe-0"><label class="u13" for="b46">Pessoa cedido</label><input id="b46" class="fld u9"><input class="fld ro grow o1" aria-label="Nome pessoa cedido"><button type="button" class="bevel go o1">»</button></div>
<div class="frow d-flex tall"><label class="u13" for="b47">Observação</label><textarea id="b47" class="fld grow"></textarea></div>
<div class="frow d-flex pe-0"><label class="u13" for="b48">Data sistema *</label><input id="b48" class="fld ro u9" value="03/09/2025"></div>
<div class="frow d-flex pe-0"><label class="u13" for="b49">Componente *</label><input id="b49" class="fld ro u9 caps" value="RHUFM034"><label class="u17 ms-auto" for="b50">Operador/Atualização</label><input id="b50" class="fld ro num u8" value="999998"><input class="fld ro u15 o1" aria-label="Data atualização" value="03/09/2025 09:57:43"></div>
</div>
<div class="sb sb2 d-flex flex-column"><button type="button" class="bevel" aria-label="Subir"><svg><use href="#up"/></svg></button><i class="th-b mt-auto"></i><button type="button" class="bevel" aria-label="Descer"><svg><use href="#dn"/></svg></button></div>
</div>
</div>
<div class="acts d-flex mt-auto"><button type="button" class="bevel"><u>A</u>tivar</button><button type="button" class="bevel"><u>C</u>ancelar</button><button type="button" class="bevel"><u>e</u>Social</button><button type="button" class="bevel log"><u>L</u>og de alteração...</button></div>
</form>
</div>
</section>
</div>
</body>
</html>
